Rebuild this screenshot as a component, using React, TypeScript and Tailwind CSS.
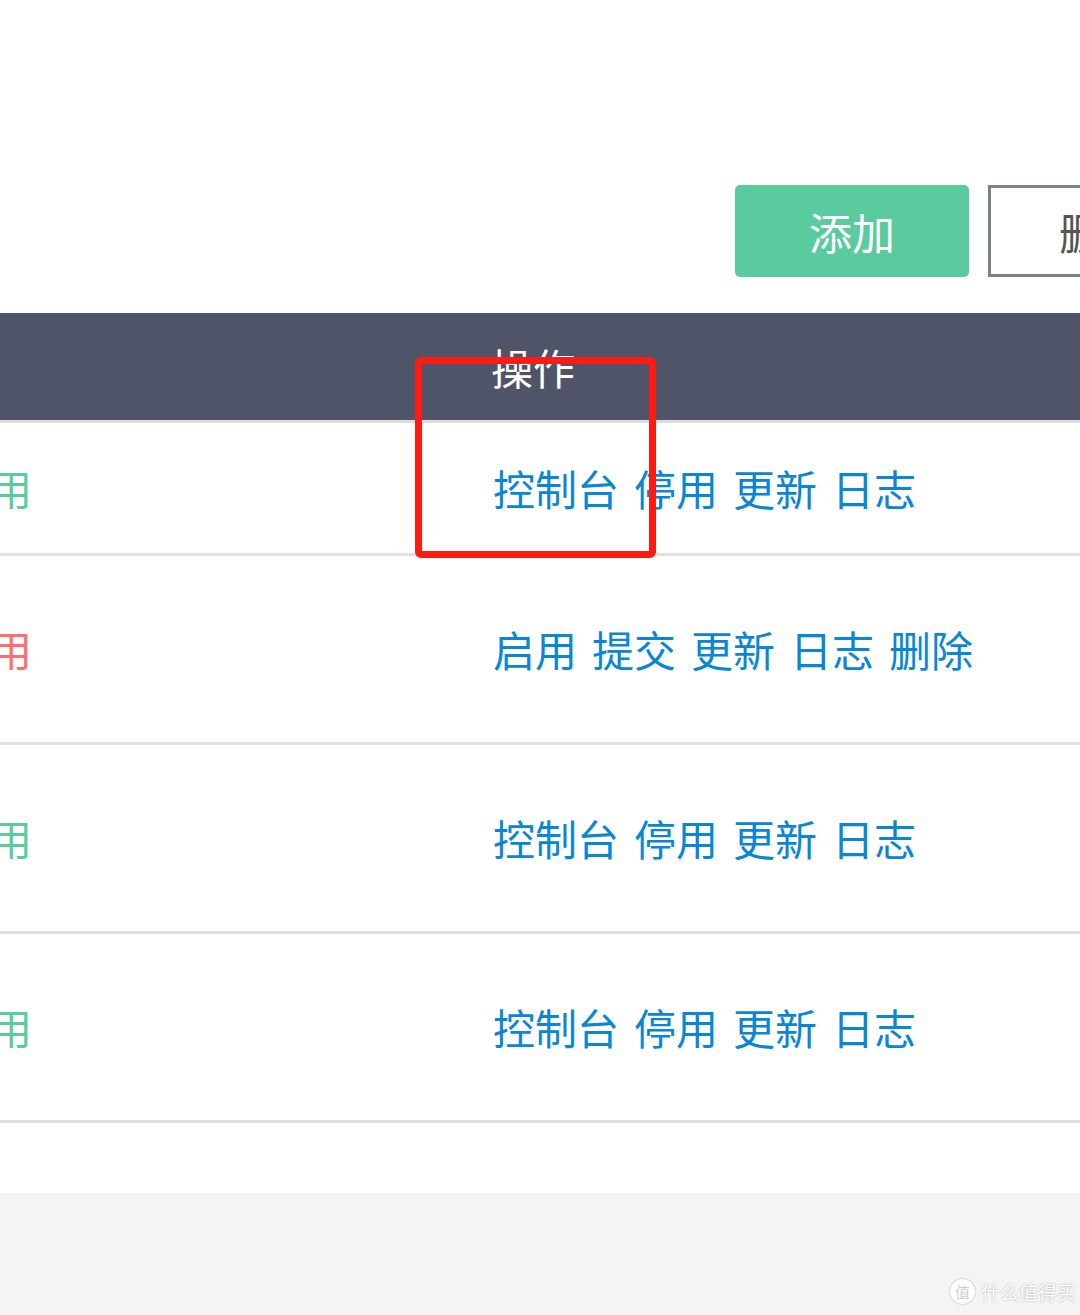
import React from 'react';

const cjk = "font-['Noto_Sans_CJK_SC','Noto_Sans',sans-serif]";

const rows = [
  { status: '停用', ok: true, h: 'h-[130px]', ops: ['控制台', '停用', '更新', '日志'] },
  { status: '启用', ok: false, h: 'h-[186px]', ops: ['启用', '提交', '更新', '日志', '删除'] },
  { status: '停用', ok: true, h: 'h-[186px]', ops: ['控制台', '停用', '更新', '日志'] },
  { status: '停用', ok: true, h: 'h-[186px]', ops: ['控制台', '停用', '更新', '日志'] },
];

export default function App() {
  return (
    <div className={`relative w-[1080px] h-[1315px] overflow-hidden bg-white ${cjk}`}>
      {/* toolbar */}
      <div className="h-[313px] flex items-start pt-[185px] pl-[735px] gap-[19px]">
        <button className="w-[234px] h-[92px] shrink-0 rounded-[5px] bg-[#5acb9e] text-white text-[43px] leading-none">
          添加
        </button>
        <button className="w-[234px] h-[92px] shrink-0 border-[3px] border-[#7d818b] bg-white text-[#555] text-[43px] leading-none pl-[68px] text-left">
          删除
        </button>
      </div>

      {/* table header */}
      <div className="h-[107px] bg-[#4f5468] flex items-center border-b-[3px] border-[#dcdcdc] box-content">
        <span className="ml-[491px] text-white text-[42px] leading-none">操作</span>
      </div>

      {/* rows */}
      {rows.map((r, i) => (
        <div key={i} className={`${r.h} flex items-center border-b-[3px] border-[#e0e0e0] box-content`}>
          <span className={`ml-[-52px] w-[545px] shrink-0 text-[42px] leading-none ${r.ok ? 'text-[#5acb9e]' : 'text-[#ff6e6e]'}`}>
            {r.status}
          </span>
          <div className="flex gap-[15px] text-[42px] leading-none text-[#0a86d6]">
            {r.ops.map((o, j) => (
              <span key={j}>{o}</span>
            ))}
          </div>
        </div>
      ))}

      <div className="h-[70px] bg-white" />
      <div className="h-[200px] bg-[#f4f4f4]" />

      {/* annotation box */}
      <div className="absolute left-[415px] top-[357px] w-[241px] h-[201px] border-[7px] border-[#ff1a14] rounded-[6px]" />

      {/* watermark */}
      <div className="absolute left-[950px] top-[1279px] flex items-center gap-[6px] text-white [text-shadow:0_0_2px_rgba(0,0,0,0.35)]">
        <div className="w-[25px] h-[25px] rounded-full bg-white shadow-[0_0_2px_rgba(0,0,0,0.35)] flex items-center justify-center text-[#cfcfcf] text-[15px] leading-none [text-shadow:none]">
          值
        </div>
        <span className="text-[19px] leading-none">什么值得买</span>
      </div>
    </div>
  );
}
